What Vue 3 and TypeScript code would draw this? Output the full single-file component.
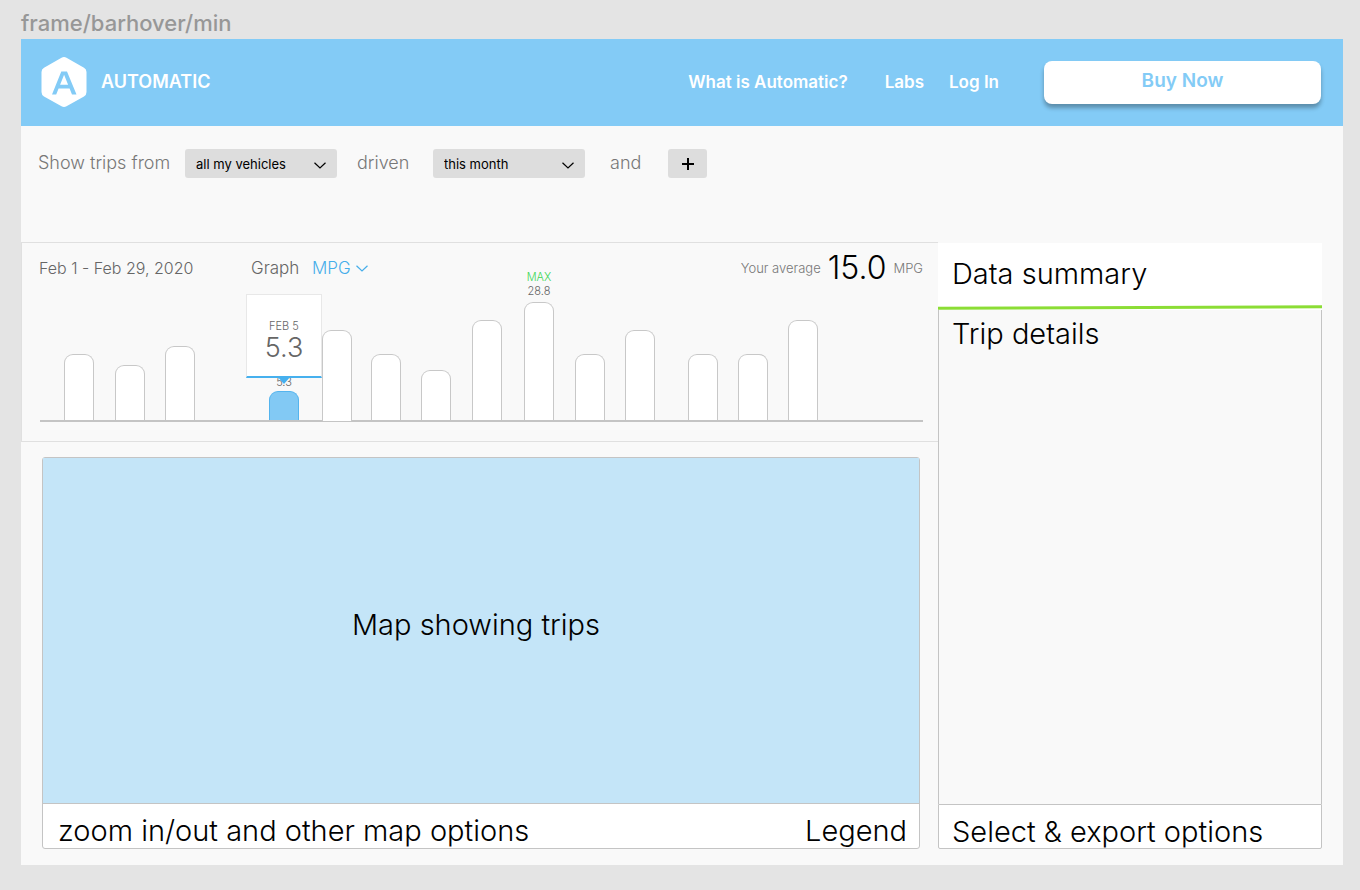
<script setup lang="ts">
import { ref } from 'vue'

interface Bar {
  before: number
  height: number
  value?: string
  active?: boolean
  max?: boolean
  front?: boolean
}

const vehicles = ref('all my vehicles')
const period = ref('this month')
const metric = ref('MPG')

const bars: Bar[] = [
  { before: 24, height: 66 },
  { before: 21, height: 55 },
  { before: 20, height: 74 },
  { before: 74, height: 29, value: '5.3', active: true },
  { before: 23, height: 91, front: true },
  { before: 19, height: 66 },
  { before: 20, height: 50 },
  { before: 21, height: 100 },
  { before: 22, height: 118, value: '28.8', max: true },
  { before: 21, height: 66 },
  { before: 20, height: 90 },
  { before: 33, height: 66 },
  { before: 20, height: 66 },
  { before: 20, height: 100 },
]
const tail = 105
</script>

<template>
  <div class="page">
    <div class="frame-name">frame/barhover/min</div>
    <div class="frame">
      <header class="header">
        <a class="brand" href="#">
          <svg class="logo" viewBox="0 0 46 52" aria-hidden="true">
            <path d="M20.500 1.700Q23 .3 25.500 1.700L43 11.700Q45.500 13 45.500 16V36Q45.500 39 43 40.400L25.500 50.300Q23 51.700 20.500 50.300L3 40.400Q.5 39 .5 36V16Q.5 13 3 11.700Z" fill="#fff" />
            <path d="M20.300 15.500H26L35.500 38.500H31L28.600 32.500H17.600L15.200 38.500H11ZM23.100 18.800 19.100 28.700H27.100Z" fill="#83cbf6" fill-rule="evenodd" />
          </svg>
          <span>AUTOMATIC</span>
        </a>
        <nav class="nav">
          <a class="what" href="#">What is Automatic?</a>
          <a class="labs" href="#">Labs</a>
          <a class="login" href="#">Log In</a>
          <button class="buy" type="button">Buy Now</button>
        </nav>
      </header>

      <form class="filters" @submit.prevent>
        <label class="from" for="vehicles">Show trips from</label>
        <span class="select">
          <select id="vehicles" v-model="vehicles">
            <option>all my vehicles</option>
          </select>
          <svg class="chevron" viewBox="0 0 12 7" aria-hidden="true"><path d="M.5.7 6 6 11.500.7" /></svg>
        </span>
        <label class="driven" for="period">driven</label>
        <span class="select">
          <select id="period" v-model="period">
            <option>this month</option>
          </select>
          <svg class="chevron" viewBox="0 0 12 7" aria-hidden="true"><path d="M.5.7 6 6 11.500.7" /></svg>
        </span>
        <span class="and">and</span>
        <button class="add" type="button" aria-label="Add filter">
          <svg viewBox="0 0 12 12" aria-hidden="true"><path d="M6 0V12M0 6H12" /></svg>
        </button>
      </form>

      <main class="content">
        <div class="left">
          <section class="graph">
            <div class="graph-head">
              <span class="dates">Feb 1 - Feb 29, 2020</span>
              <label class="metric-label" for="metric">Graph</label>
              <span class="metric">
                <select id="metric" v-model="metric">
                  <option>MPG</option>
                </select>
                <svg viewBox="0 0 12 7" aria-hidden="true"><path d="M.5.7 6 6 11.500.7" /></svg>
              </span>
              <span class="average">
                <span>Your average</span>
                <strong>15.0</strong>
                <span>MPG</span>
              </span>
            </div>
            <div class="chart">
              <template v-for="(bar, i) in bars" :key="i">
                <span class="space" :style="{ flexGrow: bar.before }"></span>
                <div class="bar" :class="{ active: bar.active, front: bar.front }" :style="{ height: bar.height + 'px' }">
                  <div v-if="bar.value" class="bar-label">
                    <span v-if="bar.max" class="max">MAX</span>
                    <span>{{ bar.value }}</span>
                  </div>
                  <div v-if="bar.active" class="tooltip" role="tooltip">
                    <span class="tip-date">FEB 5</span>
                    <span class="tip-value">{{ bar.value }}</span>
                  </div>
                </div>
              </template>
              <span class="space" :style="{ flexGrow: tail }"></span>
            </div>
          </section>

          <section class="map">
            <div class="map-view">Map showing trips</div>
            <footer class="map-foot">
              <span>zoom in/out and other map options</span>
              <span>Legend</span>
            </footer>
          </section>
        </div>

        <aside class="side">
          <h2 class="summary">Data summary</h2>
          <svg class="rule" viewBox="0 0 384 5" preserveAspectRatio="none" aria-hidden="true"><path d="M0 3.300 384 1.700" /></svg>
          <div class="details">
            <h2>Trip details</h2>
          </div>
          <footer class="export">Select &amp; export options</footer>
        </aside>
      </main>
    </div>
  </div>
</template>

<style>
body {
  margin: 0;
  background: #e4e4e4;
}
</style>

<style scoped>
* {
  box-sizing: border-box;
}

.page {
  min-height: 100vh;
  display: flex;
  flex-direction: column;
  padding: 8px 17px 25px 21px;
  font-family: Inter, "Open Sans", "Liberation Sans", sans-serif;
  font-weight: 300;
  color: #000;
  background: #e4e4e4;
}

button,
select {
  font: inherit;
  color: inherit;
  border: 0;
  margin: 0;
  appearance: none;
}

a {
  color: inherit;
  text-decoration: none;
}

h2 {
  margin: 0;
  font-size: 29px;
  line-height: 34px;
  font-weight: 300;
}

.frame-name {
  height: 31px;
  font-size: 22px;
  line-height: 30px;
  font-weight: 500;
  color: #979797;
}

.frame {
  flex: 1;
  display: flex;
  flex-direction: column;
  background: #f9f9f9;
}

.header {
  height: 87px;
  display: flex;
  align-items: center;
  justify-content: space-between;
  padding: 0 22px 2px 20px;
  background: #83cbf6;
  color: #fff;
  font-size: 17px;
  font-weight: 600;
}

.brand {
  display: flex;
  align-items: center;
  gap: 14px;
  font-size: 18px;
}

.logo {
  width: 46px;
  height: 52px;
}

.nav {
  display: flex;
  align-items: center;
}

.labs {
  margin-left: 37px;
}

.login {
  margin-left: 25px;
}

.buy {
  width: 277px;
  height: 43px;
  margin: 2px 0 0 45px;
  padding: 0 0 4px;
  border-radius: 8px;
  background: #fff;
  color: #83cbf6;
  font-size: 19px;
  box-shadow: 0 4px 4px rgba(0, 0, 0, 0.3);
}

.filters {
  height: 116px;
  display: flex;
  align-items: flex-start;
  padding: 23px 17px 0;
  font-size: 18px;
  line-height: 28px;
  color: #777;
}

.from {
  width: 147px;
}

.select {
  position: relative;
  width: 152px;
  color: #000;
}

.select select {
  display: block;
  width: 100%;
  height: 29px;
  padding: 0 30px 0 11px;
  border-radius: 3px;
  background: #ddd;
  font-size: 13px;
  font-weight: 400;
}

.chevron {
  position: absolute;
  right: 11px;
  top: 13px;
  width: 12px;
  height: 7px;
  pointer-events: none;
}

.chevron path,
.metric path {
  fill: none;
  stroke: currentColor;
  stroke-width: 1.2;
}

.driven {
  width: 96px;
  padding-left: 20px;
}

.and {
  width: 83px;
  padding-left: 25px;
}

.add {
  width: 39px;
  height: 29px;
  padding: 0;
  display: grid;
  place-items: center;
  border-radius: 3px;
  background: #ddd;
}

.add svg {
  width: 12px;
  height: 12px;
}

.add path {
  stroke: #000;
  stroke-width: 2;
}

.content {
  flex: 1;
  display: flex;
  padding: 0 21px 16px 0;
}

.left {
  flex: 917;
  display: flex;
  flex-direction: column;
}

.graph {
  height: 200px;
  padding: 0 15px 0 17px;
  border: 1px solid #e0e0e0;
  border-right: 0;
}

.graph-head {
  height: 50px;
  display: flex;
  align-items: center;
  font-size: 16px;
  color: #666;
}

.dates {
  width: 212px;
}

.metric-label {
  width: 61px;
  font-size: 17px;
}

.metric {
  display: flex;
  align-items: center;
  gap: 5px;
  font-size: 17px;
  color: #46aeea;
}

.metric select {
  padding: 0;
  background: transparent;
}

.metric svg {
  width: 12px;
  height: 7px;
}

.average {
  display: flex;
  align-items: center;
  gap: 7px;
  margin-left: auto;
  font-size: 13px;
  color: #777;
}

.average strong {
  font-size: 32px;
  line-height: 36px;
  font-weight: 300;
  color: #000;
}

.chart {
  height: 129px;
  display: flex;
  align-items: flex-end;
  margin-left: 1px;
  border-bottom: 2px solid #c4c4c4;
}

.space {
  flex: 0 1 0;
}

.bar {
  position: relative;
  flex: none;
  width: 30px;
  border: 1px solid #c8c8c8;
  border-bottom: 0;
  border-radius: 9px 9px 0 0;
  background: #fff;
}

.bar.active {
  border-color: #54b4ee;
  background: #82c9f4;
}

.bar.front {
  margin-bottom: -1px;
}

.bar-label {
  position: absolute;
  left: 50%;
  bottom: 100%;
  transform: translateX(-50%);
  display: flex;
  flex-direction: column;
  align-items: center;
  padding-bottom: 5px;
  font-size: 11px;
  line-height: 14px;
  color: #666;
}

.active .bar-label {
  padding-bottom: 3px;
}

.max {
  color: #3bd653;
}

.tooltip {
  position: absolute;
  left: 50%;
  bottom: calc(100% + 14px);
  transform: translateX(-50%);
  width: 76px;
  height: 84px;
  display: flex;
  flex-direction: column;
  align-items: center;
  padding-top: 24px;
  border: 1px solid #e8e8e8;
  border-bottom: 2px solid #46b0ee;
  background: #fff;
  color: #666;
}

.tooltip::after {
  content: "";
  position: absolute;
  top: 100%;
  left: 50%;
  margin-left: -7px;
  border: 7px solid transparent;
  border-top-width: 8px;
  border-top-color: #46b0ee;
  border-bottom: 0;
}

.tip-date {
  font-size: 11px;
  line-height: 14px;
}

.tip-value {
  font-size: 27px;
  line-height: 30px;
}

.map {
  flex: 1;
  display: flex;
  flex-direction: column;
  margin: 15px 18px 0 21px;
  border: 1px solid #c4c4c4;
  border-radius: 3px;
  font-size: 29px;
  background: #fff;
}

.map-view {
  flex: 1;
  display: flex;
  align-items: center;
  justify-content: center;
  padding: 0 10px 12px 0;
  background: #c4e5f8;
}

.map-foot {
  height: 45px;
  display: flex;
  justify-content: space-between;
  padding: 10px 12px 0 15px;
  border-top: 1px solid #c4c4c4;
  line-height: 34px;
}

.side {
  flex: 384;
  display: flex;
  flex-direction: column;
  padding-top: 1px;
}

.summary {
  height: 62px;
  padding: 14px 14px 0;
  background: #fff;
}

.rule {
  width: 100%;
  height: 5px;
  background: #fff;
}

.rule path {
  stroke: #8bdd35;
  stroke-width: 3;
}

.details {
  flex: 1;
  padding: 7px 13px 0;
  border: 1px solid #c4c4c4;
  border-width: 0 1px;
}

.export {
  height: 45px;
  padding: 10px 13px 0;
  border: 1px solid #c4c4c4;
  border-radius: 0 0 2px 2px;
  background: #fff;
  font-size: 29px;
  line-height: 34px;
}
</style>
